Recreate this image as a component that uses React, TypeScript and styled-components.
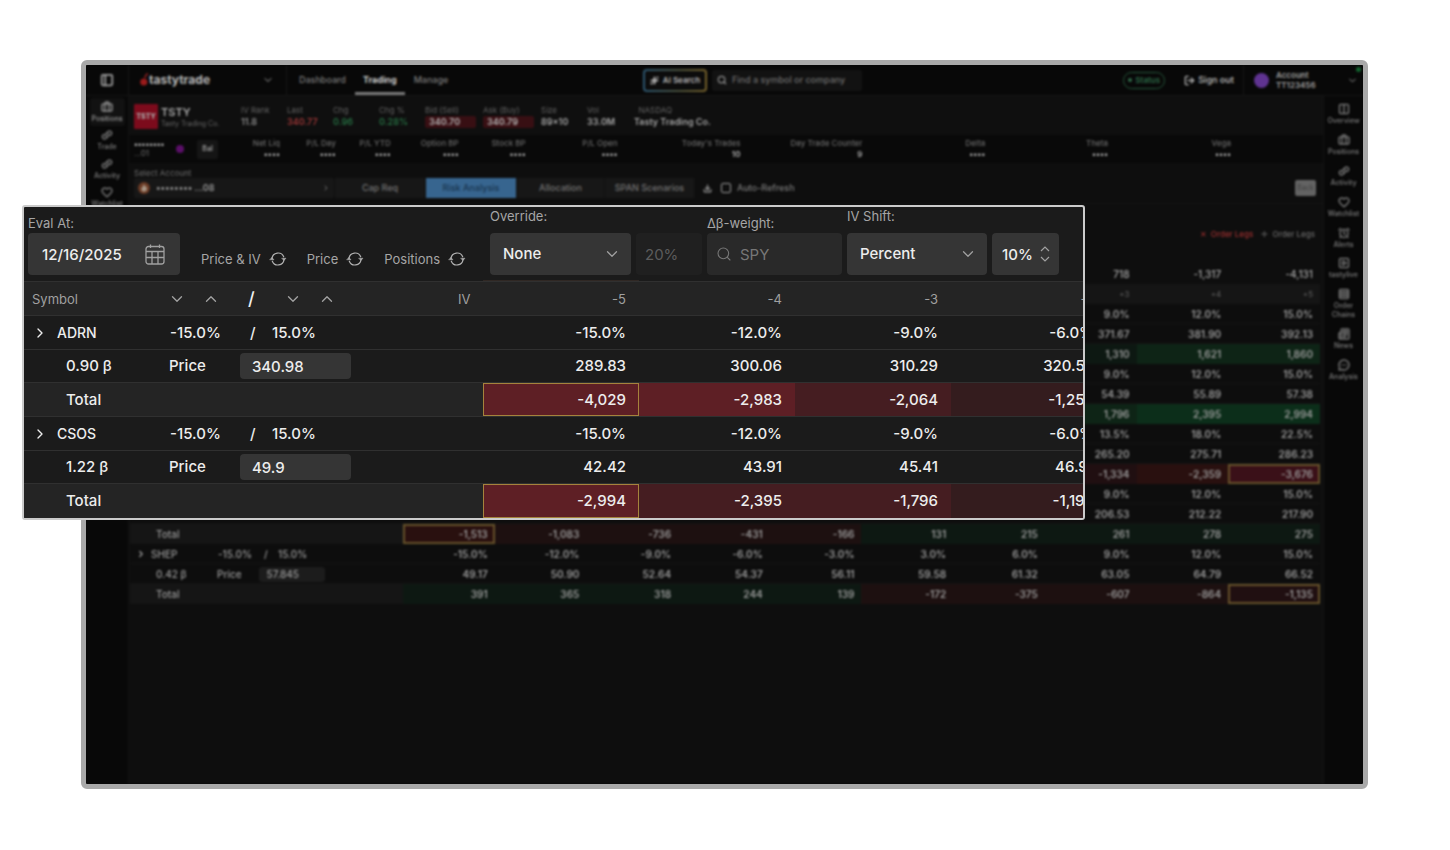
import React from "react";
import styled, { createGlobalStyle, css } from "styled-components";
import {
  AlarmClock,
  Briefcase,
  ChevronDown,
  ChevronRight,
  ChevronUp,
  Columns2,
  Download,
  Heart,
  Link2,
  LogOut,
  MessageCircleMore,
  Newspaper,
  PanelLeft,
  Rows4,
  Search,
  Sparkles,
  SquarePlay,
} from "lucide-react";

const GlobalStyle = createGlobalStyle`
  * { box-sizing: border-box; }
  body { margin: 0; background: #fff; font-family: Inter, "Liberation Sans", sans-serif; }
  button, input, select { font: inherit; color: inherit; border: 0; margin: 0; padding: 0; background: none; }
  input:focus, select:focus { outline: none; }
  table { border-collapse: collapse; table-layout: fixed; }
  th, td { padding: 0; font-weight: inherit; text-align: left; }
`;

/* ---------- page ---------- */

const Page = styled.div`
  min-height: 100vh;
  padding: 60px 82px 61px 81px;
  display: flex;
`;

const Stage = styled.div`
  position: relative;
  flex: 1;
  min-width: 0;
  display: flex;
`;

const Frame = styled.div`
  flex: 1;
  min-width: 0;
  display: flex;
  border: 5px solid #a9a9a9;
  border-radius: 6px;
  background: #080808;
  overflow: hidden;
`;

const Dimmed = styled.div`
  flex: 1;
  min-width: 0;
  display: flex;
  flex-direction: column;
  filter: blur(1px);
  color: #9c9c9c;
  font-size: 10px;
  line-height: 12px;
`;

/* ---------- top bar ---------- */

const TopBar = styled.header`
  display: flex;
  align-items: stretch;
  height: 31px;
  background: #080808;
  border-bottom: 1px solid #161616;
`;

const TopCell = styled.div<{ $width?: number; $gap?: number; $pad?: string }>`
  display: flex;
  align-items: center;
  gap: ${(p) => p.$gap ?? 0}px;
  padding: ${(p) => p.$pad ?? "0"};
  ${(p) => p.$width && css`width: ${p.$width}px;`}
  flex: none;
`;

const Divided = styled(TopCell)`
  border-right: 1px solid #161616;
`;

const Centered = styled(Divided)`
  justify-content: center;
`;

const Logo = styled.span`
  display: flex;
  align-items: center;
  color: #b8b8b8;
  font-size: 12px;
  font-weight: 700;
  flex: 1;
`;

const Nav = styled.nav`
  display: flex;
  gap: 1px;
  padding-left: 4px;
`;

const NavLink = styled.a<{ $active?: boolean }>`
  display: flex;
  align-items: center;
  padding: 0 8px;
  color: ${(p) => (p.$active ? "#c8c8c8" : "#7a7a7a")};
  font-size: 9px;
  font-weight: ${(p) => (p.$active ? 700 : 500)};
  text-decoration: none;
  border-top: 3px solid transparent;
  border-bottom: 3px solid ${(p) => (p.$active ? "#7a7a7a" : "transparent")};
`;

const Spacer = styled.div<{ $grow?: number }>`
  flex: ${(p) => p.$grow ?? 1};
`;

const AiButton = styled.button`
  display: flex;
  align-items: center;
  justify-content: center;
  gap: 4px;
  width: 64px;
  height: 23px;
  border: 2px solid transparent;
  border-radius: 4px;
  background:
    linear-gradient(#0c0c0c, #0c0c0c) padding-box,
    linear-gradient(90deg, #2b5570, #4c5038 60%, #75602a) border-box;
  color: #b5b5b5;
  font-size: 8px;
  font-weight: 600;
`;

const TopSearch = styled.label`
  display: flex;
  align-items: center;
  gap: 5px;
  width: 150px;
  height: 21px;
  padding-left: 5px;
  border-radius: 2px;
  background: #121212;
  color: #8a8a8a;
  font-size: 9px;
  font-weight: 500;
  input { width: 130px; }
  input::placeholder { color: #6e6e6e; opacity: 1; }
`;

const StatusPill = styled.button`
  display: flex;
  align-items: center;
  justify-content: center;
  gap: 3px;
  width: 42px;
  height: 17px;
  border: 1px solid #25573b;
  border-radius: 9px;
  color: #2c6847;
  font-size: 8px;
  font-weight: 600;
`;

const Dot = styled.i<{ $size: number; $color: string }>`
  width: ${(p) => p.$size}px;
  height: ${(p) => p.$size}px;
  border-radius: 50%;
  background: ${(p) => p.$color};
  flex: none;
`;

const SignOut = styled.button`
  display: flex;
  align-items: center;
  gap: 3px;
  color: #ababab;
  font-size: 9px;
  font-weight: 600;
`;

const AccountName = styled.div`
  flex: 1;
  color: #a0a0a0;
  font-size: 8px;
  line-height: 10px;
  font-weight: 600;
`;

const OnlineMark = styled(Dot)`
  position: absolute;
  top: 2px;
  right: 2px;
`;

/* ---------- rails ---------- */

const Body = styled.div`
  flex: 1;
  display: flex;
  min-width: 0;
`;

const Rail = styled.nav<{ $width: number; $top: number; $height: number }>`
  width: ${(p) => p.$width}px;
  flex: none;
  > div {
    display: flex;
    flex-direction: column;
    justify-content: space-between;
    align-items: center;
    margin-top: ${(p) => p.$top}px;
    height: ${(p) => p.$height}px;
  }
`;

const RailItem = styled.a<{ $active?: boolean }>`
  display: flex;
  flex-direction: column;
  align-items: center;
  gap: 1px;
  width: 35px;
  padding: 3px 0;
  border-radius: 3px;
  background: ${(p) => (p.$active ? "#121212" : "transparent")};
  color: ${(p) => (p.$active ? "#8a8a8a" : "#707070")};
  font-size: 7px;
  line-height: 9px;
  font-weight: 600;
  text-align: center;
  text-decoration: none;
`;

/* ---------- quote and balances ---------- */

const Main = styled.main`
  flex: 1;
  min-width: 0;
  background: #0e0e0e;
  border-left: 1px solid #141414;
  border-right: 1px solid #161616;
`;

const QuoteBar = styled.section`
  display: flex;
  align-items: center;
  height: 37px;
  margin-top: 2px;
  padding-left: 5px;
  background: #0f0f0f;
`;

const Ticker = styled.div`
  display: grid;
  place-items: center;
  width: 24px;
  height: 25px;
  border-radius: 1px;
  background: #7c0b1c;
  color: #ababab;
  font-size: 7px;
  font-weight: 800;
`;

const Company = styled.div`
  width: 83px;
  padding-left: 3px;
  font-size: 7px;
  line-height: 9px;
  color: #686868;
  b {
    display: block;
    font-size: 11px;
    line-height: 13px;
    font-weight: 600;
    color: #a8a8a8;
  }
`;

const Quote = styled.div<{ $width: number; $color?: string }>`
  width: ${(p) => p.$width}px;
  font-size: 8px;
  line-height: 11px;
  color: #626262;
  b {
    display: block;
    color: ${(p) => p.$color ?? "#8c8c8c"};
    font-size: 9px;
    line-height: 12px;
    font-weight: 600;
    white-space: nowrap;
  }
`;

const Tag = styled.b`
  width: 51px;
  padding-left: 4px;
  border-radius: 2px;
  background: #380f13;
`;

const Balances = styled.section`
  display: flex;
  align-items: center;
  height: 28px;
  padding: 0 92px 0 5px;
  background: #090909;
`;

const Masked = styled.div`
  width: 42px;
  font-size: 8px;
  line-height: 9px;
  color: #707070;
  b { display: block; color: #b0b0b0; }
`;

const SmallButton = styled.button`
  width: 21px;
  height: 19px;
  margin-left: 13px;
  border-radius: 2px;
  background: #151515;
  font-size: 7px;
  font-weight: 600;
`;

const BalanceGrid = styled.div`
  flex: 1;
  display: grid;
  grid-template-columns: 62fr 56fr 55fr 68fr 67fr 92fr 123fr 122fr 123fr 123fr 123fr;
  text-align: right;
  font-size: 8px;
  line-height: 11px;
  color: #6a6a6a;
  font-weight: 500;
  white-space: nowrap;
  b { display: block; color: #b0b0b0; font-weight: 600; }
`;

/* ---------- account controls ---------- */

const Controls = styled.section`
  padding: 5px 7px 5px 5px;
  border-bottom: 1px solid #141414;
`;

const SelectLabel = styled.label`
  display: block;
  font-size: 8px;
  line-height: 10px;
  color: #707070;
`;

const ControlRow = styled.div`
  display: flex;
  align-items: center;
  height: 20px;
`;

const AccountSelect = styled.div`
  display: flex;
  align-items: center;
  gap: 6px;
  width: 200px;
  height: 20px;
  padding: 0 4px;
  border-radius: 2px;
  background: #171717;
  color: #989898;
  select { flex: 1; appearance: none; font-size: 9px; font-weight: 600; }
`;

const Tabs = styled.div`
  display: grid;
  grid-template-columns: 91px 91px 88px 90px;
  margin: 0 8px 0 1px;
`;

const Tab = styled.button<{ $active?: boolean }>`
  height: 20px;
  background: ${(p) => (p.$active ? "#37658f" : "#171717")};
  color: ${(p) => (p.$active ? "#17344e" : "#747474")};
  font-size: 9px;
  font-weight: 500;
  border-right: 1px solid #101010;
`;

const CheckLabel = styled.label`
  display: flex;
  align-items: center;
  gap: 6px;
  margin-left: 9px;
  color: #7c7c7c;
  font-size: 9px;
  font-weight: 500;
  input {
    appearance: none;
    width: 10px;
    height: 10px;
    border: 1px solid #9a9a9a;
    border-radius: 2px;
  }
`;

const BackButton = styled.button`
  width: 21px;
  height: 16px;
  border-radius: 2px;
  background: #636363;
  color: #414141;
  font-size: 7px;
`;

const Legs = styled.div`
  display: flex;
  align-items: center;
  justify-content: flex-end;
  gap: 8px;
  height: 60px;
  padding: 0 8px 0 0;
`;

const LegButton = styled.button<{ $danger?: boolean }>`
  color: ${(p) => (p.$danger ? "#a03030" : "#6c6c6c")};
  font-size: 8px;
  font-weight: 500;
`;

/* ---------- dimmed table ---------- */

const TableWrap = styled.div`
  padding: 0 3px 0 1px;
`;

const BackTable = styled.table`
  width: 100%;
  col:first-child { width: 273px; }
  thead { color: #606060; font-size: 8px; }
  thead tr:first-child { color: #a8a8a8; font-size: 10px; font-weight: 500; }
  thead tr:last-child { background: #151515; }
`;

const BackRow = styled.tr<{ $total?: boolean }>`
  height: 20px;
  background: ${(p) => (p.$total ? "#151515" : "#0d0d0d")};
  box-shadow: inset 0 -1px 0 #141414;
`;

const BackHead = styled.th`
  height: 20px;
  padding-right: 7px;
  text-align: right;
`;

const BackCell = styled.td<{ $fill?: string; $ring?: boolean }>`
  padding-right: 7px;
  text-align: right;
  font-weight: 600;
  background: ${(p) => p.$fill ?? "transparent"};
  ${(p) => p.$ring && css`box-shadow: inset 0 0 0 2px #66522a;`}
`;

const BackLead = styled.div`
  display: flex;
  align-items: center;
  height: 20px;
  padding-left: 6px;
  font-weight: 500;
`;

const BackField = styled.input`
  width: 66px;
  height: 15px;
  margin-left: 17px;
  padding-left: 8px;
  border-radius: 3px;
  background: #1c1c1c;
`;

/* ---------- magnified panel ---------- */

const Panel = styled.section`
  position: absolute;
  top: 145px;
  left: -59px;
  right: 283px;
  border: 2px solid #cbcbcb;
  border-radius: 3px;
  background: #1b1b1b;
  color: #ededed;
  font-size: 15px;
  font-weight: 500;
  line-height: 20px;
  overflow: hidden;
`;

const Toolbar = styled.div`
  display: flex;
  align-items: flex-end;
  gap: 5px;
  height: 74px;
  padding: 0 0 6px 4px;
`;

const Field = styled.div<{ $gap?: number; $width?: number }>`
  display: flex;
  flex-direction: column;
  gap: ${(p) => p.$gap ?? 2}px;
  width: ${(p) => p.$width}px;
  flex: none;
  > label {
    color: #a6a6a6;
    font-size: 13px;
    font-weight: 400;
    line-height: 16px;
    white-space: nowrap;
  }
`;

const Box = styled.div<{ $tone?: string; $pad?: string; $gap?: number }>`
  display: flex;
  align-items: center;
  gap: ${(p) => p.$gap ?? 0}px;
  height: 42px;
  padding: ${(p) => p.$pad ?? "0 12px"};
  border-radius: 4px;
  background: ${(p) => p.$tone ?? "#353535"};
  input, select { flex: 1; min-width: 0; width: 0; height: 42px; appearance: none; }
  svg { flex: none; color: #a0a0a0; }
`;

const Faded = styled(Box)<{ $ink: string }>`
  width: 100%;
  color: ${(p) => p.$ink};
  font-weight: 400;
  input::placeholder { color: ${(p) => p.$ink}; opacity: 1; }
  svg { color: ${(p) => p.$ink}; }
`;

const Stepper = styled.div`
  display: flex;
  flex-direction: column;
  gap: 4px;
  button { display: flex; height: 7px; }
`;

const Refreshers = styled.div`
  display: flex;
  gap: 20px;
  height: 32px;
  width: 300px;
  padding-left: 16px;
  flex: none;
`;

const Refresh = styled.button`
  display: flex;
  align-items: center;
  gap: 8px;
  height: 32px;
  color: #a6a6a6;
  font-size: 13px;
  font-weight: 400;
  white-space: nowrap;
`;

const ZoomTable = styled.table`
  width: 1083px;
  .lead { width: 459px; }
  .step { width: 156px; }
`;

const ZoomRow = styled.tr<{ $tone?: "head" | "total"; $height?: number }>`
  height: ${(p) => p.$height ?? 34}px;
  background: ${(p) => (p.$tone ? "#242424" : "#1b1b1b")};
  border-top: 1px solid #303030;
  ${(p) => p.$tone === "head" && css`color: #a0a0a0; font-size: 13px; font-weight: 400;`}
`;

const stepCell = css`
  padding-right: 13px;
  text-align: right;
`;

const ZoomHead = styled.th<{ $edge?: boolean }>`
  ${stepCell}
  ${(p) => p.$edge && css`box-shadow: 0 -2px 0 #302824;`}
`;

const ZoomCell = styled.td<{ $fill?: string; $ring?: boolean }>`
  ${stepCell}
  background: ${(p) => p.$fill ?? "transparent"};
  ${(p) => p.$ring && css`box-shadow: inset 0 0 0 1px #a5833c;`}
`;

const Lead = styled.div<{ $indent: number }>`
  display: flex;
  align-items: center;
  height: 32px;
  padding-left: ${(p) => p.$indent}px;
`;

const Slot = styled.span<{ $width: number }>`
  display: flex;
  align-items: center;
  width: ${(p) => p.$width}px;
  flex: none;
`;

const Symbol = styled(Slot)`
  font-size: 14px;
`;

const Sorters = styled.span<{ $width: number }>`
  display: flex;
  gap: 16px;
  width: ${(p) => p.$width}px;
  flex: none;
`;

const Slash = styled.span`
  width: 36px;
  color: #f0f0f0;
  font-size: 18px;
  font-weight: 500;
`;

const PriceField = styled.input`
  width: 111px;
  height: 26px;
  margin-left: 34px;
  padding-left: 12px;
  border-radius: 4px;
  background: #353535;
`;

/* ---------- drawings ---------- */

const RefreshIcon = () => (
  <svg width="18" height="16" viewBox="0 0 18 16" fill="none" stroke="#b0b0b0" strokeWidth="1.2" strokeLinecap="round" strokeLinejoin="round">
    <path d="M3 7.4A6.1 6.1 0 0 1 14.7 5.8M15 8.600A6.1 6.1 0 0 1 3.300 10.200" />
    <path d="M13 7.200h4L15 9.400zM1 8.800h4L3 6.600z" fill="#b0b0b0" strokeWidth="0.500" />
  </svg>
);

const CalendarIcon = () => (
  <svg width="20" height="21" viewBox="0 0 20 21" fill="none" stroke="currentColor" strokeWidth="1.3">
    <rect x="1" y="2.5" width="18" height="17.5" rx="2.5" />
    <path d="M1 7.5h18M1 13.5h18M7 7.5V20M13 7.5V20M5.5 0.5v3.5M14.5 0.5v3.5" />
  </svg>
);

const CherryIcon = () => (
  <svg width="9" height="14" viewBox="0 0 9 14">
    <path d="M5 5C5 3 6 1.500 8 0.500" stroke="#8a2020" strokeWidth="1.500" fill="none" />
    <circle cx="3.800" cy="9" r="3.600" fill="#9a1b1b" />
  </svg>
);

const AvatarIcon = () => (
  <svg width="12" height="12" viewBox="0 0 12 12">
    <circle cx="6" cy="6" r="6" fill="#6b3b25" />
    <path d="M6 2l1 2.500h1.500L9 8 7 9.500H4.500L3 7l1.500-2z" fill="#a89888" />
  </svg>
);

const TradeIcon = () => (
  <svg width="12" height="12" viewBox="0 0 24 24" fill="none" stroke="currentColor" strokeWidth="3" strokeLinecap="round">
    <path d="M10 15a4.500 4.500 0 0 1 0-6l4-4a4.500 4.500 0 0 1 6.500 6l-2 2M14 9a4.500 4.500 0 0 1 0 6l-4 4a4.500 4.500 0 0 1-6.500-6l2-2" />
  </svg>
);

/* ---------- data ---------- */

const leftRail = [
  ["Positions", Briefcase],
  ["Trade", TradeIcon],
  ["Activity", TradeIcon],
  ["Watchlist", Heart],
] as const;

const rightRail = [
  ["Overview", Columns2],
  ["Positions", Briefcase],
  ["Activity", TradeIcon],
  ["Watchlist", Heart],
  ["Alerts", AlarmClock],
  ["tastylive", SquarePlay],
  ["Order Chains", Rows4],
  ["News", Newspaper],
  ["Analysis", MessageCircleMore],
] as const;

const balances = [
  ["Net Liq", "••••"],
  ["P/L Day", "••••"],
  ["P/L YTD", "••••"],
  ["Option BP", "••••"],
  ["Stock BP", "••••"],
  ["P/L Open", "••••"],
  ["Today's Trades", "10"],
  ["Day Trade Counter", "9"],
  ["Delta", "••••"],
  ["Theta", "••••"],
  ["Vega", "••••"],
];

const fills: Record<string, string> = {
  G: "#0c2e1a",
  g: "#0e2416",
  d: "#0d1812",
  R: "#3a1018",
  r: "#29100f",
  m: "#1d1010",
  k: "#200f11",
};

type Position = {
  symbol?: string;
  beta?: string;
  price?: string;
  pct: string;
  prices: string;
  totals: string;
  tones: string;
  ring: number;
};

const positions: Position[] = [
  { pct: "_ _ _ _ _ _ _ 9.0% 12.0% 15.0%", prices: "_ _ _ _ _ _ _ 371.67 381.90 392.13", totals: "_ _ _ _ _ _ _ 1,310 1,621 1,860", tones: "RRrmmdddgg", ring: 0 },
  { pct: "_ _ _ _ _ _ _ 9.0% 12.0% 15.0%", prices: "_ _ _ _ _ _ _ 54.39 55.89 57.38", totals: "_ _ _ _ _ _ _ 1,796 2,395 2,994", tones: "RrrmmddgGG", ring: 0 },
  { pct: "_ _ _ _ _ _ _ 13.5% 18.0% 22.5%", prices: "_ _ _ _ _ _ _ 265.20 275.71 286.23", totals: "_ _ _ _ _ _ _ -1,334 -2,359 -3,676", tones: "dddddmmkrR", ring: 9 },
  { pct: "_ _ _ _ _ _ _ 9.0% 12.0% 15.0%", prices: "_ _ _ _ _ _ _ 206.53 212.22 217.90", totals: "-1,513 -1,083 -736 -431 -166 131 215 261 278 275", tones: "rmmmmddddd", ring: 0 },
  { symbol: "SHEP", beta: "0.42 β", price: "57.845", pct: "-15.0% -12.0% -9.0% -6.0% -3.0% 3.0% 6.0% 9.0% 12.0% 15.0%", prices: "49.17 50.90 52.64 54.37 56.11 59.58 61.32 63.05 64.79 66.52", totals: "391 365 318 244 139 -172 -375 -607 -864 -1,135", tones: "dddddmmmmk", ring: 9 },
];

const zoomed = [
  {
    symbol: "ADRN",
    beta: "0.90 β",
    price: "340.98",
    pct: ["-15.0%", "-12.0%", "-9.0%", "-6.0%"],
    prices: ["289.83", "300.06", "310.29", "320.52"],
    totals: ["-4,029", "-2,983", "-2,064", "-1,256"],
    tones: ["#5e1f25", "#5e1f25", "#451d21", "#341c1e"],
  },
  {
    symbol: "CSOS",
    beta: "1.22 β",
    price: "49.9",
    pct: ["-15.0%", "-12.0%", "-9.0%", "-6.0%"],
    prices: ["42.42", "43.91", "45.41", "46.91"],
    totals: ["-2,994", "-2,395", "-1,796", "-1,198"],
    tones: ["#5e1f25", "#451d21", "#451d21", "#341c1e"],
  },
];

const cells = (line: string) => line.split(" ").map((v) => (v === "_" ? "" : v));

/* ---------- sections ---------- */

function Header() {
  return (
    <TopBar>
      <Centered $width={43}><PanelLeft size={14} strokeWidth={3} /></Centered>
      <Divided $width={158} $pad="0 12px 0 11px">
        <Logo><CherryIcon />tastytrade</Logo>
        <ChevronDown size={12} />
      </Divided>
      <Nav>
        <NavLink href="#dashboard">Dashboard</NavLink>
        <NavLink href="#trading" $active>Trading</NavLink>
        <NavLink href="#manage">Manage</NavLink>
      </Nav>
      <Spacer $grow={5} />
      <TopCell $gap={5}>
        <AiButton><Sparkles size={9} fill="currentColor" />AI Search</AiButton>
        <TopSearch>
          <Search size={10} strokeWidth={3} />
          <input aria-label="Find a symbol or company" placeholder="Find a symbol or company" />
        </TopSearch>
      </TopCell>
      <Spacer $grow={7} />
      <Divided $gap={19} $pad="0 9px 0 0">
        <StatusPill><Dot $size={4} $color="#2f6b49" />Status</StatusPill>
        <SignOut><LogOut size={11} strokeWidth={3} />Sign out</SignOut>
      </Divided>
      <TopCell $width={119} $gap={7} $pad="0 5px 0 10px">
        <Dot $size={15} $color="#5f3391" />
        <AccountName>Account<br />TT123456</AccountName>
        <ChevronDown size={11} />
      </TopCell>
      <OnlineMark $size={5} $color="#12652f" />
    </TopBar>
  );
}

function Backdrop() {
  return (
    <Dimmed>
      <Header />
      <Body>
        <Rail $width={42} $top={2} $height={113}>
          <div>
            {leftRail.map(([name, Icon], i) => (
              <RailItem key={name} href={`#${name}`} $active={i === 0}><Icon size={12} strokeWidth={3} />{name}</RailItem>
            ))}
          </div>
        </Rail>
        <Main>
          <QuoteBar>
            <Ticker>TSTY</Ticker>
            <Company><b>TSTY</b>Tasty Trading Co.</Company>
            <Quote $width={46}>IV Rank<b>11.8</b></Quote>
            <Quote $width={46} $color="#9c3636">Last<b>340.77</b></Quote>
            <Quote $width={46} $color="#266f42">Chg<b>0.96</b></Quote>
            <Quote $width={46} $color="#266f42">Chg %<b>0.28%</b></Quote>
            <Quote $width={58} $color="#b5b5b5">Bid (Sell)<Tag>340.70</Tag></Quote>
            <Quote $width={58} $color="#b5b5b5">Ask (Buy)<Tag>340.79</Tag></Quote>
            <Quote $width={46} $color="#a5a5a5">Size<b>89×10</b></Quote>
            <Quote $width={47} $color="#a5a5a5">Vol<b>33.0M</b></Quote>
            <Quote $width={80} $color="#a5a5a5">&nbsp; NASDAQ<b>Tasty Trading Co.</b></Quote>
          </QuoteBar>
          <Balances>
            <Masked><b>••••••••</b>...01</Masked>
            <Dot $size={8} $color="#5a0f68" />
            <SmallButton>Bal</SmallButton>
            <BalanceGrid>
              {balances.map(([name, value]) => (
                <span key={name}>{name}<b>{value}</b></span>
              ))}
            </BalanceGrid>
          </Balances>
          <Controls>
            <SelectLabel htmlFor="account">Select Account</SelectLabel>
            <ControlRow>
              <AccountSelect>
                <AvatarIcon />
                <select id="account"><option>•••••••• ...08</option></select>
                <ChevronRight size={8} />
              </AccountSelect>
              <Tabs>
                <Tab>Cap Req</Tab>
                <Tab $active>Risk Analysis</Tab>
                <Tab>Allocation</Tab>
                <Tab>SPAN Scenarios</Tab>
              </Tabs>
              <Download size={9} strokeWidth={3} />
              <CheckLabel><input type="checkbox" />Auto-Refresh</CheckLabel>
              <Spacer />
              <BackButton>Back</BackButton>
            </ControlRow>
          </Controls>
          <Legs>
            <LegButton $danger>✕&nbsp; Order Legs</LegButton>
            <LegButton>✛&nbsp; Order Legs</LegButton>
          </Legs>
          <TableWrap>
            <BackTable>
              <colgroup><col /><col span={10} /></colgroup>
              <thead>
                <tr><th />{cells("_ _ _ _ _ _ _ 718 -1,317 -4,131").map((v, i) => <BackHead key={i}>{v}</BackHead>)}</tr>
                <tr><th />{cells("_ _ _ _ _ _ _ +3 +4 +5").map((v, i) => <BackHead key={i}>{v}</BackHead>)}</tr>
              </thead>
              <tbody>
                {positions.map((p, n) => (
                  <React.Fragment key={n}>
                    <BackRow>
                      <td>
                        {p.symbol && (
                          <BackLead>
                            <Slot $width={15}><ChevronRight size={10} strokeWidth={3} /></Slot>
                            <Slot $width={67}>{p.symbol}</Slot>
                            <Slot $width={46}>-15.0%</Slot>
                            <Slot $width={14}>/</Slot>
                            <Slot $width={40}>15.0%</Slot>
                          </BackLead>
                        )}
                      </td>
                      {cells(p.pct).map((v, i) => <BackCell key={i}>{v}</BackCell>)}
                    </BackRow>
                    <BackRow>
                      <td>
                        {p.beta && (
                          <BackLead>
                            <Slot $width={20} />
                            <Slot $width={61}>{p.beta}</Slot>
                            <span>Price</span>
                            <BackField aria-label={`${p.symbol} price`} defaultValue={p.price} />
                          </BackLead>
                        )}
                      </td>
                      {cells(p.prices).map((v, i) => <BackCell key={i}>{v}</BackCell>)}
                    </BackRow>
                    <BackRow $total>
                      <td>{n > 2 && <BackLead><Slot $width={20} />Total</BackLead>}</td>
                      {cells(p.totals).map((v, i) => (
                        <BackCell key={i} $fill={fills[p.tones[i]]} $ring={p.ring === i}>{v}</BackCell>
                      ))}
                    </BackRow>
                  </React.Fragment>
                ))}
              </tbody>
            </BackTable>
          </TableWrap>
        </Main>
        <Rail $width={39} $top={4} $height={284}>
          <div>
            {rightRail.map(([name, Icon]) => (
              <RailItem key={name} href={`#${name}`}><Icon size={12} strokeWidth={3} />{name}</RailItem>
            ))}
          </div>
        </Rail>
      </Body>
    </Dimmed>
  );
}

function RiskPanel() {
  return (
    <Panel>
      <Toolbar>
        <Field $width={152}>
          <label htmlFor="eval">Eval At:</label>
          <Box $pad="0 15px 0 14px"><input id="eval" defaultValue="12/16/2025" /><CalendarIcon /></Box>
        </Field>
        <Refreshers>
          <Refresh>Price &amp; IV<RefreshIcon /></Refresh>
          <Refresh>Price<RefreshIcon /></Refresh>
          <Refresh>Positions<RefreshIcon /></Refresh>
        </Refreshers>
        <Field $gap={9} $width={141}>
          <label htmlFor="override">Override:</label>
          <Box $pad="0 10px 0 13px">
            <select id="override"><option>None</option></select>
            <ChevronDown size={18} strokeWidth={1.7} />
          </Box>
        </Field>
        <Field $width={66}>
          <Faded $tone="#202020" $ink="#5c5c5c" $pad="0 9px"><input aria-label="Override amount" defaultValue="20%" disabled /></Faded>
        </Field>
        <Field $width={135}>
          <label htmlFor="weight">Δβ-weight:</label>
          <Faded $tone="#292929" $ink="#777" $pad="0 9px" $gap={8}>
            <Search size={16} strokeWidth={1.6} />
            <input id="weight" placeholder="SPY" />
          </Faded>
        </Field>
        <Field $gap={9} $width={140}>
          <label htmlFor="shift">IV Shift:</label>
          <Box $pad="0 10px 0 13px">
            <select id="shift"><option>Percent</option></select>
            <ChevronDown size={18} strokeWidth={1.7} />
          </Box>
        </Field>
        <Field $width={67}>
          <Box $pad="0 8px 0 10px">
            <input aria-label="IV shift amount" defaultValue="10%" />
            <Stepper>
              <button aria-label="Increase">
                <svg width="12" height="7" viewBox="0 0 12 7" fill="none" stroke="currentColor" strokeWidth="1.2"><path d="M2 6l4-4 4 4" /></svg>
              </button>
              <button aria-label="Decrease">
                <svg width="12" height="7" viewBox="0 0 12 7" fill="none" stroke="currentColor" strokeWidth="1.2"><path d="M2 1l4 4 4-4" /></svg>
              </button>
            </Stepper>
          </Box>
        </Field>
      </Toolbar>
      <ZoomTable>
        <colgroup><col className="lead" /><col span={4} className="step" /></colgroup>
        <thead>
          <ZoomRow $tone="head">
            <th>
              <Lead $indent={8}>
                <Slot $width={136}>Symbol</Slot>
                <Sorters $width={80}><ChevronDown size={18} strokeWidth={1.8} /><ChevronUp size={18} strokeWidth={1.8} /></Sorters>
                <Slash>/</Slash>
                <Sorters $width={174}><ChevronDown size={18} strokeWidth={1.8} /><ChevronUp size={18} strokeWidth={1.8} /></Sorters>
                <span>IV</span>
              </Lead>
            </th>
            <ZoomHead $edge>-5</ZoomHead>
            <ZoomHead>-4</ZoomHead>
            <ZoomHead>-3</ZoomHead>
            <ZoomHead>-2</ZoomHead>
          </ZoomRow>
        </thead>
        <tbody>
          {zoomed.map((p) => (
            <React.Fragment key={p.symbol}>
              <ZoomRow>
                <td>
                  <Lead $indent={8}>
                    <Slot $width={25}><ChevronRight size={16} strokeWidth={2} /></Slot>
                    <Symbol $width={113}>{p.symbol}</Symbol>
                    <Slot $width={80}>-15.0%</Slot>
                    <Slot $width={22}>/</Slot>
                    <span>15.0%</span>
                  </Lead>
                </td>
                {p.pct.map((v) => <ZoomCell key={v}>{v}</ZoomCell>)}
              </ZoomRow>
              <ZoomRow $height={33}>
                <td>
                  <Lead $indent={42}>
                    <Slot $width={103}>{p.beta}</Slot>
                    <span>Price</span>
                    <PriceField aria-label={`${p.symbol} price`} defaultValue={p.price} />
                  </Lead>
                </td>
                {p.prices.map((v) => <ZoomCell key={v}>{v}</ZoomCell>)}
              </ZoomRow>
              <ZoomRow $tone="total">
                <td><Lead $indent={42}>Total</Lead></td>
                {p.totals.map((v, i) => <ZoomCell key={v} $fill={p.tones[i]} $ring={i === 0}>{v}</ZoomCell>)}
              </ZoomRow>
            </React.Fragment>
          ))}
        </tbody>
      </ZoomTable>
    </Panel>
  );
}

export default function App() {
  return (
    <Page>
      <GlobalStyle />
      <Stage>
        <Frame><Backdrop /></Frame>
        <RiskPanel />
      </Stage>
    </Page>
  );
}
